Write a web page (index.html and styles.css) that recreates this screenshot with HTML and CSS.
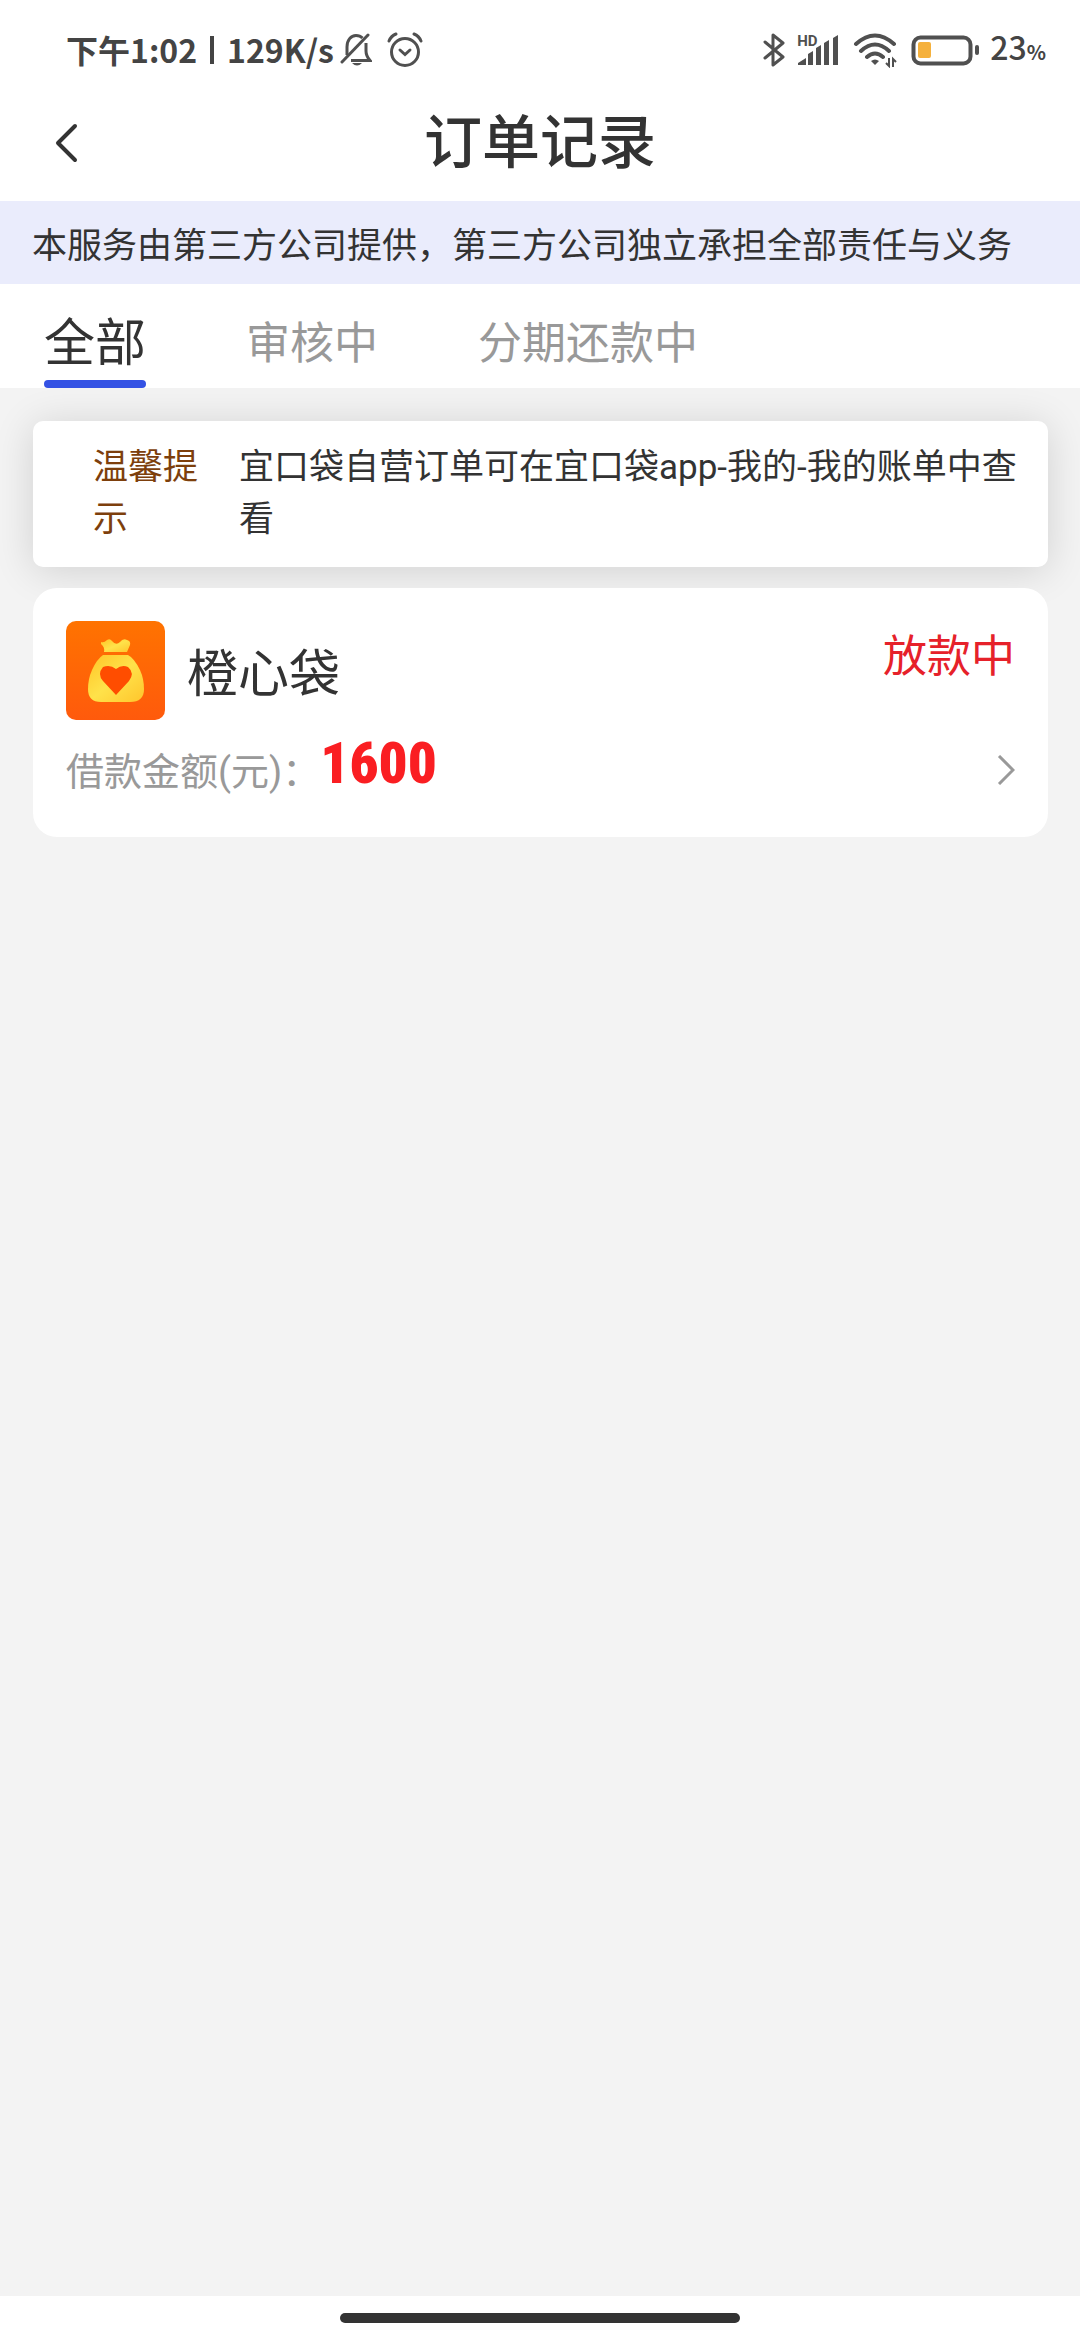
FILE: index.html
```html
<!DOCTYPE html>
<html lang="zh-CN">
<head>
<meta charset="utf-8">
<meta name="viewport" content="width=device-width, initial-scale=1">
<title>订单记录</title>
<link rel="stylesheet" href="styles.css">
</head>
<body>
<div class="status-bar">
  <div class="status-group">
    <span class="status-text">下午1:02</span>
    <span class="status-divider"></span>
    <span class="status-text">129K/s</span>
    <svg class="icon-bell" width="32" height="34" viewBox="0 0 32 34" fill="none" stroke="#505050" stroke-width="3">
      <path d="M7 22V14C7 7 11 2.500 16 2.500Q20 2.500 22.500 5M26 10V18Q26 23 30 27.500H11"/>
      <path d="M2 29 28 2" stroke-linecap="round"/>
      <path d="M12 30H22Q17 35 12 30Z" fill="#505050" stroke="none"/>
    </svg>
    <svg class="icon-alarm" width="36" height="36" viewBox="0 0 36 36" fill="none" stroke="#505050" stroke-width="3" stroke-linecap="round">
      <circle cx="18" cy="20" r="13.500"/>
      <path d="M2 9Q4 4 9 2M27 2Q32 4 34 9M13 18 18 22.500 23 18"/>
    </svg>
  </div>
  <div class="status-group">
    <svg width="22" height="36" viewBox="0 0 22 36" fill="none" stroke="#505050" stroke-width="3" stroke-linejoin="round" stroke-linecap="round">
      <path d="M2 10 20 25 10 33V3L20 11 2 26"/>
    </svg>
    <div class="signal">
      <span class="signal-hd">HD</span>
      <svg width="42" height="32" viewBox="0 0 42 32" fill="#505050">
        <path d="M1 31V29L9 24V31ZM11 31V20L16 17V31ZM19 31V14L24 11V31ZM27 31V9L32 6V31ZM36 31V4L41 1V31Z"/>
      </svg>
    </div>
    <svg class="icon-wifi" width="44" height="36" viewBox="0 0 44 36" fill="none" stroke="#505050" stroke-width="4" stroke-linecap="round">
      <path d="M3 12Q22-5 41 12M8 19Q22 6 36 19M14 25Q22 18 30 25"/>
      <path d="M18 29Q22 26 26 29L22 33Z" fill="#505050" stroke="none"/>
      <path d="M36 26V34L33 31M40 35V27L43 30" stroke-width="2" stroke-linecap="butt"/>
    </svg>
    <svg class="icon-battery" width="69" height="32" viewBox="0 0 69 32">
      <rect x="2.500" y="3.500" width="57" height="26" rx="7" fill="none" stroke="#505050" stroke-width="4"/>
      <rect x="7" y="8" width="13" height="16" rx="2" fill="#f5b13d"/>
      <rect x="64" y="11" width="4" height="10" rx="2" fill="#505050"/>
    </svg>
    <span class="status-text status-level">23<small class="percent">%</small></span>
  </div>
</div>

<header class="nav-bar">
  <button class="back" type="button" aria-label="返回">
    <svg width="24" height="40" viewBox="0 0 24 40" fill="none" stroke="#333" stroke-width="4" stroke-linecap="round" stroke-linejoin="round"><path d="M21 3 4 20 21 37"/></svg>
  </button>
  <h1 class="title">订单记录</h1>
</header>

<p class="notice">本服务由第三方公司提供，第三方公司独立承担全部责任与义务</p>

<nav class="tabs">
  <button class="tab tab-active" type="button">全部</button>
  <button class="tab" type="button">审核中</button>
  <button class="tab" type="button">分期还款中</button>
</nav>

<main class="content">
  <section class="tip">
    <span class="tip-label">温馨提示</span>
    <p class="tip-text">宜口袋自营订单可在宜口袋app-我的-我的账单中查看</p>
  </section>

  <a class="order" href="#order">
    <div class="order-head">
      <svg class="logo" width="99" height="99" viewBox="0 0 99 99">
        <defs>
          <linearGradient id="tile" x1="0" y1="0" x2="0" y2="1"><stop offset="0" stop-color="#ff7300"/><stop offset="1" stop-color="#ff5a0c"/></linearGradient>
          <linearGradient id="bag" x1="0" y1="0" x2="1" y2="1"><stop offset="0" stop-color="#ffc426"/><stop offset=".5" stop-color="#ffe24a"/><stop offset="1" stop-color="#ffc52c"/></linearGradient>
        </defs>
        <rect width="99" height="99" rx="10" fill="url(#tile)"/>
        <path d="M35 21Q38 22 41 19Q44 17 46 20Q50 25 54 21Q57 17 61 19Q65 20 64 24L61 31H38Q39 26 35 23Z" fill="url(#bag)"/>
        <path d="M37 34H62Q68 37 74 49Q78 58 78 68Q78 81 64 81H35Q22 81 22 68Q22 58 26 49Q31 38 37 34Z" fill="url(#bag)"/>
        <path d="M50 48Q56 43 62 46Q69 52 63 60L50 74 37 60Q31 53 37 46Q44 43 50 48Z" fill="#ff4d00"/>
      </svg>
      <h2 class="order-name">橙心袋</h2>
      <span class="order-state">放款中</span>
    </div>
    <div class="order-row">
      <span class="amount-label">借款金额(元)：</span>
      <strong class="amount">1600</strong>
      <svg class="chevron" width="18" height="30" viewBox="0 0 18 30" fill="none" stroke="#999" stroke-width="3"><path d="M2 1 16 15 2 29"/></svg>
    </div>
  </a>
</main>

<footer class="home-bar"><span class="home-pill"></span></footer>
</body>
</html>
```

FILE: styles.css
```css
* { box-sizing: border-box; }

body {
  margin: 0;
  min-height: 100vh;
  display: flex;
  flex-direction: column;
  background: #fff;
  color: #333;
  font-family: Roboto, "Noto Sans CJK SC", sans-serif;
}

h1, h2, p { margin: 0; font-weight: 400; }
button { border: 0; padding: 0; background: none; color: inherit; font-family: inherit; }
svg { display: block; flex: none; }

.status-bar {
  display: flex;
  justify-content: space-between;
  height: 100px;
  padding: 0 34px 0 66px;
}
.status-group { display: flex; align-items: center; }
.status-text {
  padding-bottom: 3px;
  font-family: "Noto Sans CJK SC", sans-serif;
  font-size: 32px;
  line-height: 40px;
  font-weight: 700;
  color: #444;
}
.status-divider { width: 4px; height: 28px; margin: 0 13px; background: #444; }
.icon-bell { margin-left: 6px; }
.icon-alarm { margin-left: 15px; }
.signal { position: relative; margin-left: 12px; }
.signal-hd {
  position: absolute;
  left: 0;
  top: 0;
  font-size: 15px;
  line-height: 14px;
  font-weight: 700;
  color: #505050;
}
.icon-wifi { margin-left: 14px; }
.icon-battery { margin-left: 14px; }
.status-level { margin-left: 10px; font-weight: 500; }
.percent { font-size: 20px; font-weight: 700; }

.nav-bar {
  display: grid;
  grid-template-columns: 1fr auto 1fr;
  align-items: center;
  height: 101px;
  padding: 0 54px 16px;
}
.back { justify-self: start; }
.title { font-size: 58px; line-height: 80px; font-weight: 500; }

.notice {
  padding: 20px 32px 11px;
  background: #eaecfc;
  font-size: 35px;
  line-height: 52px;
}

.tabs {
  display: flex;
  gap: 100px;
  height: 104px;
  padding: 0 44px;
}
.tab {
  border-bottom: 8px solid transparent;
  padding-top: 24px;
  font-size: 44px;
  line-height: 72px;
  color: #999;
}
.tab-active { position: relative; font-size: 51px; color: #333; }
.tab-active::after {
  content: "";
  position: absolute;
  left: 0;
  right: 0;
  bottom: -8px;
  height: 8px;
  border-radius: 4px;
  background: #3452e4;
}

.content {
  flex: 1;
  padding: 33px 32px 33px 33px;
  background: #f3f3f3;
  overflow: hidden;
}

.tip {
  display: flex;
  gap: 41px;
  padding: 21px 30px 21px 60px;
  border-radius: 10px;
  background: #fff;
  box-shadow: 0 4px 40px rgba(0, 0, 0, 0.14);
  font-size: 35px;
  line-height: 52px;
}
.tip-label { flex: none; width: 105px; color: #7d3f0c; }
.tip-text { flex: 1; }

.order {
  display: block;
  position: relative;
  margin-top: 21px;
  padding: 33px 33px 32px;
  border-radius: 24px;
  background: #fff;
  color: inherit;
  text-decoration: none;
}
.order-head { display: flex; align-items: center; }
.order-name { margin-left: 22px; padding-top: 8px; font-size: 51px; line-height: 72px; }
.order-state {
  align-self: flex-start;
  margin-left: auto;
  font-size: 44px;
  line-height: 72px;
  color: #e6212a;
}
.order-row { display: flex; align-items: center; height: 85px; }
.amount-label { padding-top: 18px; font-size: 38px; line-height: 56px; color: #999; }
.amount {
  padding-top: 2px;
  font-family: "Liberation Sans Narrow", "Roboto Condensed", Roboto, sans-serif;
  font-size: 57px;
  line-height: 72px;
  font-weight: 900;
  color: #fa1e22;
}
.chevron { margin-top: 14px; margin-left: auto; }

.home-bar { height: 44px; padding-top: 17px; background: #fff; }
.home-pill {
  display: block;
  width: 37%;
  height: 10px;
  margin: 0 auto;
  border-radius: 5px;
  background: #333;
}
```
